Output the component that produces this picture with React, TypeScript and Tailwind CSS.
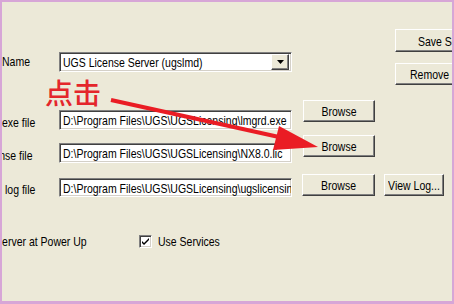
import React from 'react';

const raised =
  'border border-t-white border-l-white border-r-[#404040] border-b-[#404040] shadow-[inset_-1px_-1px_0_#808080] bg-[#ece9d8]';
const sunken =
  'border border-t-[#808080] border-l-[#808080] border-r-white border-b-white shadow-[inset_1px_1px_0_#404040,inset_-1px_-1px_0_#d4d0c8] bg-white';

// text in the capture is a bit taller than it is wide
const T: React.FC<{ children: React.ReactNode; className?: string }> = ({ children, className = '' }) => (
  <span className={`inline-block scale-y-[1.18] whitespace-nowrap ${className}`}>{children}</span>
);

const Button: React.FC<{ label: string; className?: string }> = ({ label, className = '' }) => (
  <div className={`${raised} flex items-center justify-center shrink-0 ${className}`}>
    <T>{label}</T>
  </div>
);

const Field: React.FC<{ value: string; className?: string }> = ({ value, className = '' }) => (
  <div className={`${sunken} w-[233px] flex items-center pl-[3px] overflow-hidden shrink-0 ${className}`}>
    <T>{value}</T>
  </div>
);

export default function App() {
  return (
    <div
      className="relative w-[454px] h-[304px] overflow-hidden bg-[#ece9d8] border-t-2 border-l-2 border-r-2 border-b-[3px] border-[#d7a6d7] text-[10.5px] leading-[16px] text-black"
      style={{ fontFamily: '"Liberation Sans", Arial, sans-serif' }}
    >
      <div className="flex items-start pt-[27px]">
        {/* left part */}
        <div className="w-[393px] shrink-0 flex flex-col">
          <div className="flex items-start mt-[23px]">
            <div className="w-[57px] shrink-0 mt-[1px]"><T>Name</T></div>
            <div className={`${sunken} w-[233px] h-[20px] flex items-center justify-between pl-[3px] pr-[2px]`}>
              <T>UGS License Server (ugslmd)</T>
              <div className={`${raised} w-[18px] h-[16px] flex items-center justify-center`}>
                <svg width="7" height="4" viewBox="0 0 7 4">
                  <path d="M0 0h7L3.5 4z" fill="#000" />
                </svg>
              </div>
            </div>
          </div>

          <div className="flex items-start mt-[28px]">
            <div className="w-[57px] shrink-0 mt-[14px]"><T>exe file</T></div>
            <Field value="D:\Program Files\UGS\UGSLicensing\lmgrd.exe" className="mt-[10px] h-[20px]" />
            <Button label="Browse" className="ml-[11px] w-[72px] h-[22px]" />
          </div>

          <div className="flex items-start mt-[5px]">
            <div className="w-[57px] shrink-0 overflow-hidden mt-[12px]">
              <T className="-ml-[22px]">License file</T>
            </div>
            <Field value="D:\Program Files\UGS\UGSLicensing\NX8.0.lic" className="mt-[8px] h-[20px]" />
            <Button label="Browse" className="ml-[11px] w-[72px] h-[22px]" />
          </div>

          <div className="flex items-start mt-[11px]">
            <div className="w-[57px] shrink-0 mt-[7px] pl-[3px]"><T>log file</T></div>
            <Field value="D:\Program Files\UGS\UGSLicensing\ugslicensing.log" className="mt-[4px] h-[19px]" />
            <Button label="Browse" className="ml-[10px] w-[73px] h-[22px]" />
            <Button label="View Log..." className="ml-[9px] w-[60px] h-[22px]" />
          </div>

          <div className="flex items-center mt-[36px] h-[16px]">
            <div className="w-[137px] shrink-0 overflow-hidden">
              <T className="-ml-[32px]">Start Server at Power Up</T>
            </div>
            <div className={`${sunken} w-[13px] h-[13px] flex items-center justify-center`}>
              <svg width="9" height="9" viewBox="0 0 9 9">
                <path d="M1 4l2 2 5-5v2l-5 5-2-2z" fill="#000" />
              </svg>
            </div>
            <T className="ml-[6px]">Use Services</T>
          </div>
        </div>

        {/* right buttons */}
        <div className="flex flex-col">
          <div className={`${raised} w-[100px] h-[23px] flex items-center pl-[22px]`}><T>Save Service</T></div>
          <div className={`${raised} w-[100px] h-[22px] mt-[11px] flex items-center pl-[14px]`}><T>Remove Service</T></div>
        </div>
      </div>

      {/* annotation */}
      <div
        className="absolute left-[43px] top-[73px] text-[28px] leading-[34px] text-[#e4262b] font-medium"
        style={{ fontFamily: '"Noto Sans CJK SC", sans-serif' }}
      >
        点击
      </div>
      <svg className="absolute left-0 top-0 pointer-events-none" width="454" height="304" viewBox="-2 -2 454 304">
        <line x1="107" y1="96" x2="275" y2="133" stroke="#ea1c24" strokeWidth="4" />
        <polygon points="314,143 269,146 275,122" fill="#ea1c24" />
      </svg>
    </div>
  );
}
